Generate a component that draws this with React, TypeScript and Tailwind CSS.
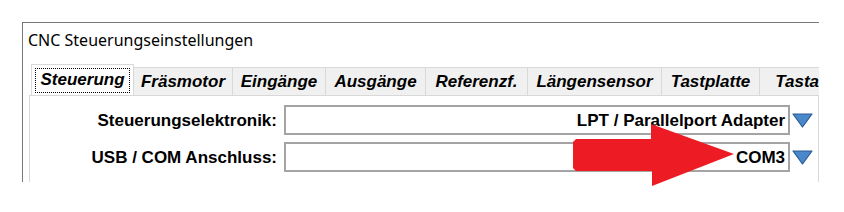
import React from 'react';

const tabs = [
  { label: 'Steuerung', w: 'w-[103px]', active: true },
  { label: 'Fräsmotor', w: 'w-[99px]' },
  { label: 'Eingänge', w: 'w-[93px]' },
  { label: 'Ausgänge', w: 'w-[100px]' },
  { label: 'Referenzf.', w: 'w-[102px]' },
  { label: 'Längensensor', w: 'w-[134px]' },
  { label: 'Tastplatte', w: 'w-[98px]' },
  { label: 'Tastatur', w: 'w-[98px]' },
];

const rows = [
  { label: 'Steuerungselektronik:', value: 'LPT / Parallelport Adapter' },
  { label: 'USB / COM Anschluss:', value: 'COM3' },
];

function DropTriangle() {
  return (
    <svg width="21" height="15" viewBox="0 0 21 15" className="shrink-0">
      <polygon points="1,1 20,1 10.5,14" fill="#4a88cc" stroke="#2a5a92" strokeWidth="1.2" strokeLinejoin="round" />
    </svg>
  );
}

export default function App() {
  return (
    <div className="relative w-[844px] h-[212px] bg-white overflow-hidden pt-[22px] pl-[22px]">
      {/* Window */}
      <div className="w-[797px] h-[160px] border-t border-l border-[#777777] bg-white overflow-hidden flex flex-col">
        <div className="h-[41px] pl-[5px] pt-[6px] text-[16px] leading-[22px] text-black" style={{ fontFamily: '"Noto Sans", sans-serif' }}>
          CNC Steuerungseinstellungen
        </div>

        <div className="ml-[6px] flex-1 flex flex-col" style={{ fontFamily: '"Liberation Sans", Arial, sans-serif' }}>
          {/* Tabs */}
          <div className="h-[31px] flex items-end pl-[2px] overflow-hidden whitespace-nowrap">
            {tabs.map((t) =>
              t.active ? (
                <div key={t.label} className={`${t.w} shrink-0 h-[32px] -mb-px relative z-10 bg-white border-t border-l border-r border-[#d9d9d9] p-[3px]`}>
                  <div className="h-[25px] border border-dotted border-black flex items-center justify-center text-[17px] font-bold italic text-black leading-none pb-[2px]">
                    {t.label}
                  </div>
                </div>
              ) : (
                <div key={t.label} className={`${t.w} shrink-0 h-[28px] bg-[#f0f0f0] border-t border-r border-[#d9d9d9] flex items-center justify-center text-[17px] font-bold italic text-black leading-none`}>
                  {t.label}
                </div>
              )
            )}
          </div>

          {/* Panel */}
          <div className="flex-1 border-t border-l border-r border-[#d9d9d9] bg-white pt-[9px] flex flex-col gap-[7px] w-[790px]">
            {rows.map((r) => (
              <div key={r.label} className="h-[30px] flex items-center">
                <div className="w-[247px] text-right text-[17px] font-bold text-black leading-none">{r.label}</div>
                <div className="ml-[7px] w-[506px] h-[30px] border-2 border-[#a4a4a4] bg-white flex items-center justify-end pr-[3px] text-[17px] font-bold text-black leading-none">
                  {r.value}
                </div>
                <div className="ml-[2px]">
                  <DropTriangle />
                </div>
              </div>
            ))}
          </div>
        </div>
      </div>

      {/* Red annotation arrow over the content */}
      <svg className="absolute left-0 top-0 pointer-events-none" width="844" height="212" viewBox="0 0 844 212">
        <polygon
          points="576,139 651,139 651,124 734,154 652,186 652,171 576,171 573,168 573,142"
          fill="#ed1c24"
        />
      </svg>
    </div>
  );
}
